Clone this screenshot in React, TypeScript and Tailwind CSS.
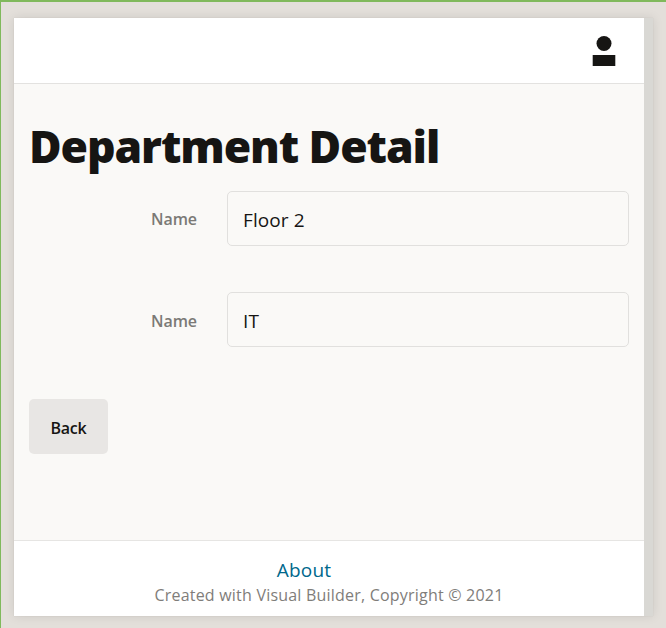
import React from 'react';

function Field({ value, labelClass }: { value: string; labelClass: string }) {
  return (
    <div className="flex h-[55px] items-center">
      <label className={`w-[168px] text-right text-[16px] leading-none font-semibold text-[#7b7976] ${labelClass}`}>
        <span className="inline-block tracking-[-0.1px]">Name</span>
      </label>
      <div className="ml-[30px] flex h-[55px] w-[402px] items-center rounded-[5px] border border-[#e1e0de] pl-[15px] pt-[3px] text-[19px] text-[#161513]">
        <span className="tracking-[0.1px]">{value}</span>
      </div>
    </div>
  );
}

export default function App() {
  return (
    <div className="h-[628px] w-[666px] overflow-hidden border-t-2 border-l border-[#80b95c] bg-[#e3dfda] pt-4 pl-[13px] font-['Open_Sans','Noto_Sans',sans-serif]">
      <div className="flex h-[598px] w-[639px] bg-[#d9d8d4] shadow-[0_0_10px_rgba(0,0,0,0.10),0_0_1px_rgba(0,0,0,0.10)]">
        <div className="flex w-[630px] flex-col bg-[#faf9f7]">
          <header className="flex h-[66px] justify-end border-b border-[#e3e2e0] bg-white pt-[18px] pr-7">
            <svg width="24" height="31" viewBox="0 0 24 31" fill="#161513">
              <circle cx="12" cy="7.5" r="7.5" />
              <rect x="0.7" y="19" width="22.6" height="11" />
            </svg>
          </header>
          <main className="flex grow flex-col items-start pl-[15px]">
            <h1 className="mt-[33px] h-[58px] text-[44.5px] leading-[58px] font-extrabold tracking-[-1.1px] whitespace-nowrap text-[#161513]">
              <span>Department Detail</span>
            </h1>
            <div className="mt-[16px] flex flex-col gap-[46px]">
              <Field value="Floor 2" labelClass="" />
              <Field value="IT" labelClass="pt-[2px]" />
            </div>
            <button className="mt-[52px] h-[55px] w-[79px] rounded-[5px] bg-[#e8e6e4] pt-[2px] text-[16px] font-semibold text-[#161513]">
              <span className="tracking-[-0.2px]">Back</span>
            </button>
          </main>
          <footer className="flex h-[76px] flex-col items-center border-t border-[#e6e5e3] bg-white pt-[17px]">
            <a className="mr-[50px] h-[25px] text-[19px] leading-[25px] text-[#00688c]">
              <span className="tracking-[0.2px]">About</span>
            </a>
            <p className="h-[25px] text-[16px] leading-[25px] whitespace-nowrap text-[#7f7d7a]">
              <span className="tracking-[0.21px]">Created with Visual Builder, Copyright © 2021</span>
            </p>
          </footer>
        </div>
      </div>
    </div>
  );
}
